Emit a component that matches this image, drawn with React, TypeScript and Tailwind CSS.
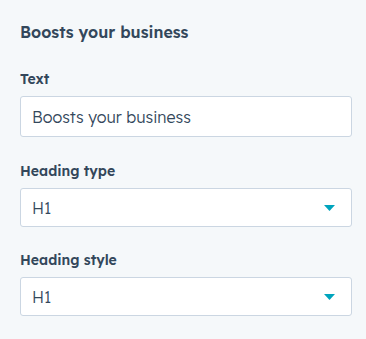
const font = { fontFamily: '"Lexend Deca", Lato, "Noto Sans", sans-serif' }

function Caret() {
  return (
    <svg width="11" height="6" viewBox="0 0 11 6" className="shrink-0">
      <path d="M0 0h11L5.5 6z" fill="#00a4bd" />
    </svg>
  )
}

function Field({ label, children, className }: { label: string; children: React.ReactNode; className?: string }) {
  return (
    <div className={`flex flex-col ${className ?? ''}`}>
      <label className="mb-[8px] text-[14px] font-semibold leading-[18px] text-[#33475b]">{label}</label>
      {children}
    </div>
  )
}

function Select({ value }: { value: string }) {
  return (
    <div className="flex h-[39px] items-center justify-between rounded-[3px] border border-[#cbd6e2] bg-white pl-[11px] pr-[16px]">
      <span className="text-[16px] font-light text-[#33475b]">{value}</span>
      <Caret />
    </div>
  )
}

export default function App() {
  return (
    <div className="min-h-[339px] w-[366px] bg-[#f5f8fa] pl-[20px] pr-[14px] pt-[22px]" style={font}>
      <h2 className="text-[16px] font-semibold leading-[20px] text-[#33475b]">Boosts your business</h2>
      <div className="mt-[28px] flex flex-col">
        <Field label="Text">
          <div className="flex h-[41px] items-center rounded-[3px] border border-[#cbd6e2] bg-white pl-[11px]">
            <span className="text-[16px] font-light text-[#33475b]">Boosts your business</span>
          </div>
        </Field>
        <Field label="Heading type" className="mt-[25px]">
          <Select value="H1" />
        </Field>
        <Field label="Heading style" className="mt-[24px]">
          <Select value="H1" />
        </Field>
      </div>
    </div>
  )
}
